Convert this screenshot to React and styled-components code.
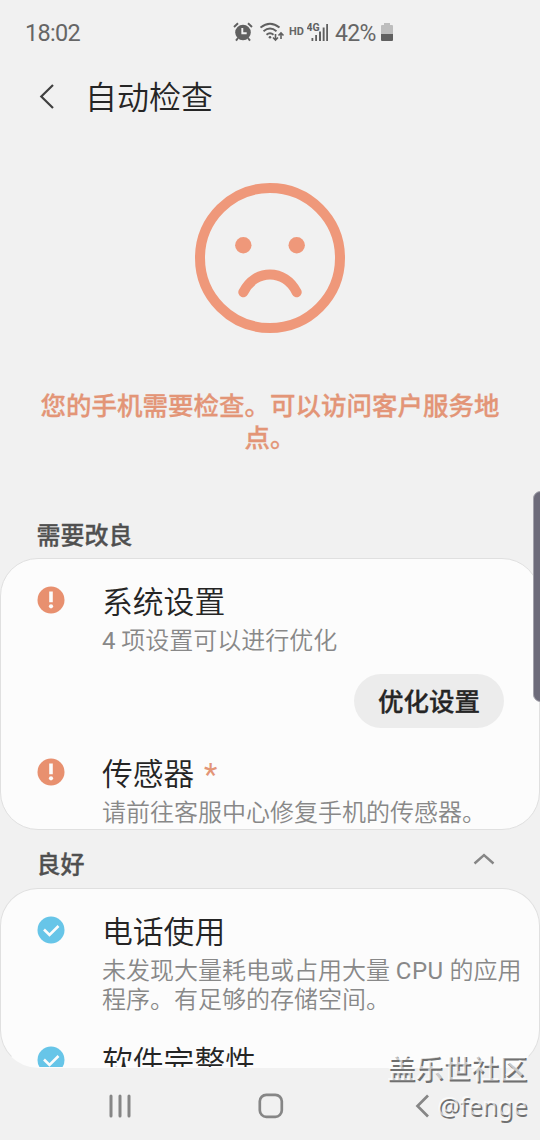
import React from 'react';
import styled, { createGlobalStyle } from 'styled-components';

const GlobalStyle = createGlobalStyle`
  * { box-sizing: border-box; }
  html, body { margin: 0; padding: 0; background: #f1f1f1; }
  body { font-family: Roboto, "Noto Sans CJK SC", sans-serif; color: #252525; }
  svg { display: block; flex: none; }
`;

const Screen = styled.div`
  position: relative;
  display: flex;
  flex-direction: column;
  width: 540px;
  height: 1140px;
  overflow: hidden;
  background: #f1f1f1;
`;

const StatusBar = styled.header`
  display: flex;
  flex: none;
  align-items: center;
  justify-content: space-between;
  height: 64px;
  padding: 2px 147px 0 25px;
  color: #666;
  font-size: 23px;
`;

const Clock = styled.span`
  font-size: 23.5px;
  letter-spacing: -0.7px;
`;

const StatusIcons = styled.div`
  display: flex;
  align-items: center;
  height: 26px;
  padding-bottom: 2px;
`;

const AlarmSlot = styled.span`
  margin: 0 7px 0 0;
`;

const HdLabel = styled.span`
  margin: 0 3px 0 4px;
  font-size: 11px;
  font-weight: 700;
  line-height: 20px;
`;

const Percent = styled.span`
  width: 43px;
  margin: 0 3px 0 6px;
  padding-top: 2px;
  font-size: 23px;
  letter-spacing: -0.7px;
  white-space: nowrap;
`;

const TitleBar = styled.div`
  display: flex;
  flex: none;
  align-items: center;
  gap: 30px;
  height: 66px;
  padding-left: 39px;
`;

const Title = styled.h1`
  margin: 0;
  padding-top: 2px;
  font-size: 32px;
  font-weight: 350;
  line-height: 40px;
`;

const Hero = styled.section`
  display: flex;
  flex: none;
  flex-direction: column;
  align-items: center;
  height: 385px;
  padding-top: 52.5px;
`;

const HeroText = styled.p`
  width: 470px;
  margin: 57.5px 0 0;
  color: #e39577;
  font-size: 25.5px;
  font-weight: 500;
  line-height: 32px;
  text-align: center;
  -webkit-text-stroke: 0.3px #e39577;
`;

const SectionHead = styled.div`
  display: flex;
  flex: none;
  align-items: center;
  justify-content: space-between;
  height: ${(p) => p.$height}px;
  padding: 0 45px ${(p) => p.$lift || 0}px 36.5px;
`;

const SectionTitle = styled.h2`
  margin: 0;
  padding-top: ${(p) => p.$drop || 0}px;
  color: #505050;
  font-size: 24px;
  font-weight: 500;
  line-height: 30px;
  -webkit-text-stroke: 0.3px #505050;
`;

const Card = styled.section`
  flex: none;
  height: ${(p) => p.$height}px;
  padding: 23px 0 0 36px;
  overflow: hidden;
  background: #fcfcfc;
  border: 1px solid #e0e0e0;
  border-bottom-color: ${(p) => (p.$open ? 'transparent' : '#e0e0e0')};
  border-radius: 38px;
`;

const Item = styled.article`
  display: flex;
  height: ${(p) => p.$height}px;
`;

const ItemIcon = styled.div`
  flex: none;
  width: 65px;
  padding-top: 4px;
`;

const ItemBody = styled.div`
  flex: 1;
  min-width: 0;
`;

const ItemTitle = styled.h3`
  margin: 0;
  font-size: 30.8px;
  font-weight: 350;
  line-height: 41px;
`;

const Mark = styled.span`
  margin-left: 9.5px;
  color: #e39577;
  font-weight: 400;
`;

const ItemText = styled.p`
  margin: 4px 0 0;
  color: #888;
  font-size: 24px;
  font-weight: 350;
  line-height: 29px;
  white-space: pre-line;
`;

const Latin = styled.span`
  font-weight: 400;
  letter-spacing: ${(p) => p.$spacing || 0}px;
`;

const ActionRow = styled.div`
  display: flex;
  justify-content: flex-end;
  padding: 18px 35px 0 0;
`;

const PillButton = styled.button`
  width: 150px;
  height: 54px;
  padding: 2px 0 0;
  border: 0;
  border-radius: 27px;
  background: #ececec;
  color: #252525;
  font: 500 25.5px/30px Roboto, "Noto Sans CJK SC", sans-serif;
  -webkit-text-stroke: 0.3px #252525;
`;

const NavBar = styled.nav`
  display: flex;
  flex: none;
  align-items: center;
  height: 72px;
  padding: 3px 0 0 108px;
  background: #f1f1f1;
`;

const NavButton = styled.span`
  width: ${(p) => p.$width}px;
`;

const EdgeHandle = styled.div`
  position: absolute;
  top: 491px;
  right: -8px;
  width: 15px;
  height: 211px;
  border: 1px solid #a2a1aa;
  border-radius: 8px;
  background: #6d6b7a;
`;

const Watermark = styled.div`
  position: absolute;
  right: 13px;
  bottom: 16px;
  color: rgba(255, 255, 255, 0.65);
  font-family: "Noto Sans", "Noto Sans CJK SC", sans-serif;
  font-size: 28px;
  font-weight: 500;
  line-height: 37px;
  text-align: right;
  text-shadow: 1.5px 1.5px 0 #707070;
`;

const Handle = styled.div`
  font-size: 25px;
  font-weight: 400;
`;

const AlarmIcon = () => (
  <svg width="20" height="20" viewBox="0 0 20 20" fill="none" stroke="#606060">
    <circle cx="10" cy="10.5" r="7.8" fill="#606060" stroke="none" />
    <path d="M1 5 5 1.3M15 1.3 19 5M5 16 3 18.6M15 16l2 2.6" strokeWidth="2" />
    <path d="M9.3 6v5.2h4.4" stroke="#f1f1f1" strokeWidth="1.9" />
  </svg>
);

const WifiIcon = () => (
  <svg width="25" height="20" viewBox="0 0 25 20" fill="none" stroke="#606060" strokeWidth="1.9">
    <path d="M.5 5.6Q10-2.3 19.5 5.6M3.5 9.3Q10 3.8 16.5 9.3M6.500 12.8Q10 9.8 13.5 12.8" />
    <circle cx="10" cy="15.3" r="1.3" fill="#606060" stroke="none" />
    <path d="M15.5 12v6M13 15.5l2.5 2.5 2.5-2.5M21 17v-6M18.5 13.500l2.5-2.5 2.5 2.5" strokeWidth="1.6" />
  </svg>
);

const SignalIcon = () => (
  <svg width="22" height="20" viewBox="0 0 22 20" fill="#606060">
    <text x="-.5" y="8.5" fontFamily="Roboto" fontSize="10.5" fontWeight="700">4G</text>
    <path d="M4.5 16h1.8v3H4.5zM8.2 13h1.8v6H8.2zM12 9.5h2v9.5h-2zM15.7 5.5h1.9v13.5h-1.9zM19.2 2h1.8v17h-1.8z" />
  </svg>
);

const BatteryIcon = () => (
  <svg width="12" height="18" viewBox="0 0 12 18">
    <path d="M3 0h6v2h2q1 0 1 1v8H0V3q0-1 1-1h2z" fill="#bdbdbd" />
    <path d="M0 11h12v6q0 1-1 1H1q-1 0-1-1z" fill="#606060" />
  </svg>
);

const BackIcon = () => (
  <svg width="16" height="26" viewBox="0 0 16 26" fill="none" stroke="#404040" strokeWidth="2.2">
    <path d="M14 1 2.3 12.5 14 24" />
  </svg>
);

const SadFace = () => (
  <svg width="150" height="150" viewBox="0 0 150 150" fill="none" stroke="#ef987a" strokeWidth="10">
    <circle cx="75" cy="75" r="70" />
    <circle cx="48.3" cy="62.2" r="8.2" fill="#ef987a" stroke="none" />
    <circle cx="101.7" cy="62.2" r="8.2" fill="#ef987a" stroke="none" />
    <path d="M48.3 109.2C60 85.5 90 85.5 101.7 109.2" strokeLinecap="round" />
  </svg>
);

const AlertIcon = () => (
  <svg width="28" height="28" viewBox="0 0 28 28">
    <circle cx="14" cy="14" r="13.5" fill="#e8906f" />
    <path d="M12.2 5.5h3.6v10.7h-3.6z" fill="#fcfcfc" />
    <circle cx="14" cy="20.3" r="2.1" fill="#fcfcfc" />
  </svg>
);

const CheckIcon = () => (
  <svg width="28" height="28" viewBox="0 0 28 28" fill="none">
    <circle cx="14" cy="14" r="13.5" fill="#67c5e8" />
    <path d="M7 13.5 12.5 19 21.5 10" stroke="#fcfcfc" strokeWidth="2.6" />
  </svg>
);

const CollapseIcon = () => (
  <svg width="22" height="12" viewBox="0 0 22 12" fill="none" stroke="#868686" strokeWidth="2.4">
    <path d="M1.5 10.5 11 2l9.5 8.5" />
  </svg>
);

const RecentsIcon = () => (
  <svg width="24" height="24" viewBox="0 0 24 24" stroke="#868686" strokeWidth="3" strokeLinecap="round">
    <path d="M3 2v20M12 2v20M21 2v20" />
  </svg>
);

const HomeIcon = () => (
  <svg width="26" height="26" viewBox="0 0 26 26" fill="none" stroke="#868686" strokeWidth="2.7">
    <rect x="1.8" y="1.8" width="22" height="22" rx="6.5" />
  </svg>
);

const NavBackIcon = () => (
  <svg width="15" height="24" viewBox="0 0 15 24" fill="none" stroke="#868686" strokeWidth="2.7">
    <path d="M13 1.5 2.5 12 13 22.5" />
  </svg>
);

export default function App() {
  return (
    <>
      <GlobalStyle />
      <Screen>
        <StatusBar>
          <Clock>18:02</Clock>
          <StatusIcons>
            <AlarmSlot><AlarmIcon /></AlarmSlot>
            <WifiIcon />
            <HdLabel>HD</HdLabel>
            <SignalIcon />
            <Percent>42%</Percent>
            <BatteryIcon />
          </StatusIcons>
        </StatusBar>
        <TitleBar>
          <BackIcon />
          <Title>自动检查</Title>
        </TitleBar>
        <Hero>
          <SadFace />
          <HeroText>您的手机需要检查。可以访问客户服务地点。</HeroText>
        </Hero>
        <SectionHead $height={43} $lift={2}>
          <SectionTitle>需要改良</SectionTitle>
        </SectionHead>
        <Card $height={272}>
          <Item $height={172}>
            <ItemIcon><AlertIcon /></ItemIcon>
            <ItemBody>
              <ItemTitle>系统设置</ItemTitle>
              <ItemText><Latin>4</Latin> 项设置可以进行优化</ItemText>
              <ActionRow>
                <PillButton>优化设置</PillButton>
              </ActionRow>
            </ItemBody>
          </Item>
          <Item $height={72}>
            <ItemIcon><AlertIcon /></ItemIcon>
            <ItemBody>
              <ItemTitle>传感器<Mark>*</Mark></ItemTitle>
              <ItemText>请前往客服中心修复手机的传感器。</ItemText>
            </ItemBody>
          </Item>
        </Card>
        <SectionHead $height={58}>
          <SectionTitle $drop={11}>良好</SectionTitle>
          <CollapseIcon />
        </SectionHead>
        <Card $height={180} $open>
          <Item $height={130}>
            <ItemIcon><CheckIcon /></ItemIcon>
            <ItemBody>
              <ItemTitle>电话使用</ItemTitle>
              <ItemText>未发现大量耗电或占用大量 <Latin $spacing={0.5}>CPU</Latin>{' 的应用\n程序。有足够的存储空间。'}</ItemText>
            </ItemBody>
          </Item>
          <Item $height={60}>
            <ItemIcon><CheckIcon /></ItemIcon>
            <ItemBody>
              <ItemTitle>软件完整性</ItemTitle>
            </ItemBody>
          </Item>
        </Card>
        <NavBar>
          <NavButton $width={150}><RecentsIcon /></NavButton>
          <NavButton $width={157}><HomeIcon /></NavButton>
          <NavButton $width={15}><NavBackIcon /></NavButton>
        </NavBar>
        <EdgeHandle />
        <Watermark>
          盖乐世社区
          <Handle>@fenge</Handle>
        </Watermark>
      </Screen>
    </>
  );
}
